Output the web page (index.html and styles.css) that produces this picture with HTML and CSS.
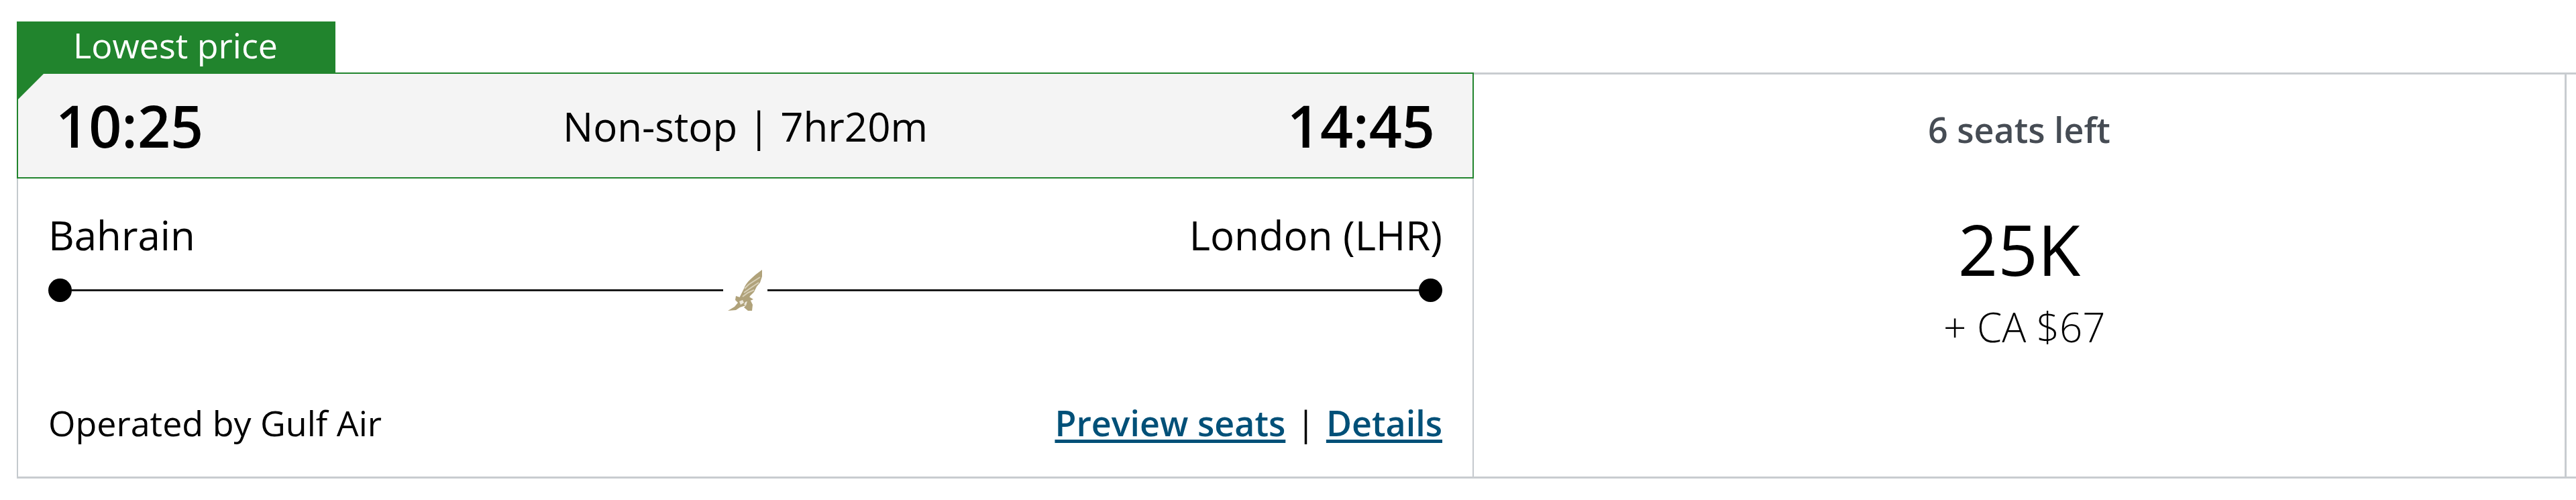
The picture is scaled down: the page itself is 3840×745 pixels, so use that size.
FILE: index.html
```html
<!DOCTYPE html>
<html lang="en">
<head>
<meta charset="utf-8">
<title>Flight result</title>
<link rel="stylesheet" href="styles.css">
</head>
<body>
<main class="result">
  <div class="badge">Lowest price</div>
  <div class="row">
    <section class="flight">
      <header class="times">
        <time class="time">10:25</time>
        <span class="summary">Non-stop | 7hr20m</span>
        <time class="time">14:45</time>
      </header>
      <div class="details">
        <div class="cities">
          <span>Bahrain</span>
          <span>London (LHR)</span>
        </div>
        <div class="route">
          <span class="dot"></span>
          <span class="line"></span>
          <svg class="logo" viewBox="0 0 66 72" role="img" aria-label="Gulf Air">
            <g fill="#b0a27a">
              <path d="M58 6C44 16 34 25 31 34L22 52L37 52L40 45L46 39L50 31L55 25L58 16Z"/>
              <path d="M19 45L28 48L34 44L40 47L45 50L38 53L34 59L25 62L19 66L7 67L17 61L22 55L18 51Z"/>
              <path d="M37 52L41 52L44 58L43 67L37 67L31 62L34 59Z"/>
            </g>
            <path d="M55 17L38 28L32 34M53 25L44 31L31 40M46 36L37 40L29 46" fill="none" stroke="#d8d0b8" stroke-width="2"/>
            <path d="M24 53l5-2 2 4-5 3zM33 54l3-1-2 6-3-1z" fill="#ece7da"/>
          </svg>
          <span class="line"></span>
          <span class="dot"></span>
        </div>
        <div class="footer">
          <span>Operated by Gulf Air</span>
          <nav class="links">
            <a href="#seats">Preview seats</a>
            <span>|</span>
            <a href="#details">Details</a>
          </nav>
        </div>
      </div>
    </section>
    <section class="fare">
      <p class="seats">6 seats left</p>
      <p class="points">25K</p>
      <p class="cash">&nbsp;+ CA $67</p>
    </section>
    <section class="next"></section>
  </div>
</main>
</body>
</html>
```
FILE: styles.css
```css
* {
  box-sizing: border-box;
}

body {
  margin: 0;
  background: #fff;
  color: #000;
  font-family: "Open Sans", "Noto Sans", sans-serif;
  font-size: 60px;
  line-height: 80px;
}

p {
  margin: 0;
}

.result {
  padding: 32px 0 32px 25px;
}

.badge {
  width: fit-content;
  padding: 0 86px 6px 84px;
  background: #21842d;
  color: #fff;
  font-size: 52px;
  line-height: 70px;
}

.row {
  display: grid;
  grid-template-columns: 2172fr 1629fr 14fr;
  border-top: 3px solid #c8ccd0;
  border-bottom: 3px solid #c8ccd0;
}

.flight {
  border-left: 2px solid #c4c9cd;
  border-right: 2px solid #c4c9cd;
}

.times {
  position: relative;
  display: grid;
  grid-template-columns: 1fr auto 1fr;
  align-items: center;
  margin: -3px -2px 0;
  padding: 21px 56px;
  border: 2px solid #21842d;
  background: #f4f4f4;
}

.times::before {
  content: "";
  position: absolute;
  top: 0;
  left: 0;
  width: 38px;
  height: 38px;
  background: #21842d;
  clip-path: polygon(0 0, 100% 0, 0 100%);
}

.time {
  font-size: 86px;
  font-weight: 600;
  line-height: 112px;
}

.summary {
  padding-top: 2px;
}

.time:last-child {
  text-align: right;
}

.details {
  padding: 44px 45px;
}

.cities,
.footer {
  display: flex;
  justify-content: space-between;
}

.route {
  display: flex;
  align-items: center;
  height: 84px;
}

.dot {
  width: 35px;
  height: 35px;
  border-radius: 50%;
  background: #000;
}

.line {
  flex: 1;
  height: 3px;
  background: #1a1a1a;
}

.logo {
  width: 66px;
  height: 72px;
}

.footer {
  padding-top: 120px;
  font-size: 52px;
  line-height: 72px;
}

.links {
  display: flex;
  gap: 16px;
}

.links a {
  color: #005078;
  font-weight: 600;
  text-decoration-thickness: 5px;
  text-underline-offset: 5px;
}

.fare {
  padding-top: 46px;
  border-right: 3px solid #c8ccd0;
  text-align: center;
}

.seats {
  color: #464c54;
  font-size: 52px;
  font-weight: 600;
  line-height: 72px;
}

.points {
  padding-top: 72px;
  font-size: 104px;
  line-height: 140px;
}

.cash {
  padding-top: 6px;
  font-weight: 300;
}
```
